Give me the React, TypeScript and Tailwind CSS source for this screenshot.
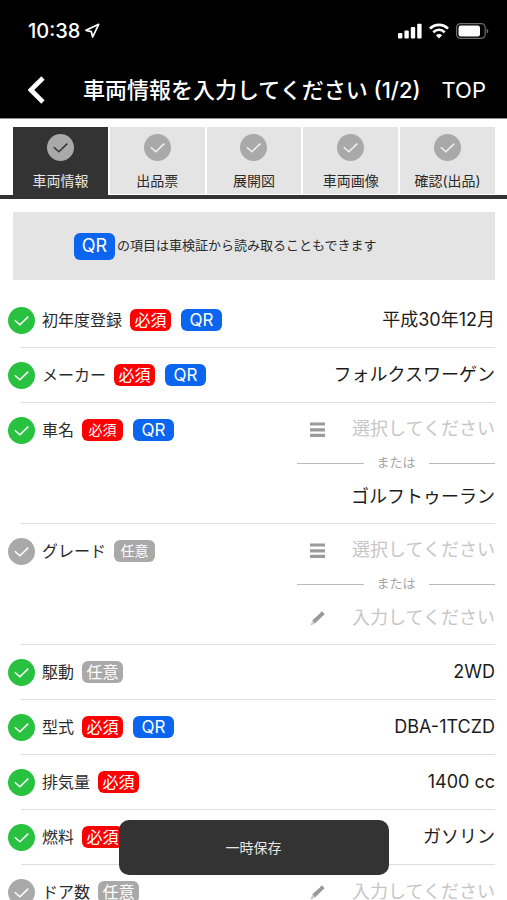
import React, { useState } from 'react';
import { Navigation } from 'lucide-react';
import clsx from 'clsx';

type BadgeKind = 'required' | 'optional' | 'qr';

interface Field {
  id: string;
  label: string;
  done: boolean;
  required: boolean;
  qr?: boolean;
  smallBadge?: boolean;
  selectable?: boolean;
  pencil?: boolean;
  value: string;
}

const STEPS = ['車両情報', '出品票', '展開図', '車両画像', '確認(出品)'];

const FIELDS: Field[] = [
  { id: 'first-registration', label: '初年度登録', done: true, required: true, qr: true, value: '平成30年12月' },
  { id: 'maker', label: 'メーカー', done: true, required: true, qr: true, value: 'フォルクスワーゲン' },
  { id: 'model-name', label: '車名', done: true, required: true, qr: true, smallBadge: true, selectable: true, value: 'ゴルフトゥーラン' },
  { id: 'grade', label: 'グレード', done: false, required: false, smallBadge: true, selectable: true, pencil: true, value: '' },
  { id: 'drive', label: '駆動', done: true, required: false, value: '2WD' },
  { id: 'model-code', label: '型式', done: true, required: true, qr: true, value: 'DBA-1TCZD' },
  { id: 'displacement', label: '排気量', done: true, required: true, value: '1400 cc' },
  { id: 'fuel', label: '燃料', done: true, required: true, value: 'ガソリン' },
  { id: 'doors', label: 'ドア数', done: false, required: false, pencil: true, value: '' },
];

const CheckCircle = ({ fill, stroke = '#ffffff' }: { fill: string; stroke?: string }) => (
  <svg width="27" height="27" viewBox="0 0 27 27" className="shrink-0" aria-hidden="true">
    <circle cx="13.5" cy="13.5" r="13.5" fill={fill} />
    <path d="M6.8 13.2l5.1 4.6 8.4-8.2" fill="none" stroke={stroke} strokeWidth="1.5" />
  </svg>
);

const ListIcon = () => (
  <svg width="15" height="15" viewBox="0 0 15 15" className="shrink-0" aria-hidden="true">
    <path d="M0 2h15M0 7.8h15M0 13.4h15" stroke="#9b9b9b" strokeWidth="3.2" />
  </svg>
);

const PencilIcon = () => (
  <svg width="15" height="15" viewBox="0 0 15 15" className="shrink-0" aria-hidden="true">
    <path d="M3.6 11L10.6 4.4M11.2 3.8L13.3 1.8" stroke="#999999" strokeWidth="4" />
    <path d="M10 5L12 3.1" stroke="#999999" strokeWidth="3.4" />
    <path d="M2.2 10.2L4.8 12.8L0.4 14.6Z" fill="#c4c4c4" />
  </svg>
);

const StatusBar = () => (
  <div className="flex h-[62px] items-center justify-between pl-7 pr-[18px]">
    <div className="flex items-center gap-1 text-xl font-medium">
      <span>10:38</span>
      <Navigation size={16} strokeWidth={2.6} />
    </div>
    <div className="flex items-center gap-[7px]">
      <svg width="24" height="16" viewBox="0 0 24 16" fill="#ffffff" aria-hidden="true">
        <rect x="0" y="10" width="4.4" height="5.6" rx="1" />
        <rect x="6.4" y="7.4" width="4.4" height="8.2" rx="1" />
        <rect x="12.8" y="4" width="4.4" height="11.6" rx="1" />
        <rect x="19.2" y="0.8" width="4.4" height="14.8" rx="1" />
      </svg>
      <svg width="20" height="16" viewBox="0 0 20 16" fill="none" stroke="#ffffff" aria-hidden="true">
        <path d="M1 5.6C6 0.6 14 0.6 19 5.6" strokeWidth="2.7" />
        <path d="M4.3 9.2C7.6 6 12.4 6 15.7 9.2" strokeWidth="2.6" />
        <path d="M10 15.4L6.9 12.2C8.6 10.7 11.4 10.7 13.1 12.2Z" fill="#ffffff" stroke="none" />
      </svg>
      <svg width="33" height="16" viewBox="0 0 33 16" aria-hidden="true">
        <rect x="0.6" y="0.6" width="28.6" height="14.8" rx="4" fill="none" stroke="#6f6f6f" strokeWidth="1.2" />
        <rect x="2.5" y="2.5" width="21.5" height="11" rx="2.2" fill="#ffffff" />
        <path d="M30.6 5.4C32.8 6.2 32.8 9.8 30.6 10.6Z" fill="#6f6f6f" />
      </svg>
    </div>
  </div>
);

const Badge = ({ kind, small }: { kind: BadgeKind; small?: boolean }) => {
  const base = 'flex h-[22px] w-[41px] shrink-0 items-center justify-center rounded-md text-white';
  if (kind === 'qr') {
    return <button type="button" className={clsx(base, 'bg-[#0b65ee] pt-0.5 text-[17px]')}>QR</button>;
  }
  return (
    <span
      className={clsx(
        base,
        small ? 'text-sm' : 'text-base',
        kind === 'required' ? 'bg-[#fe0000]' : 'bg-[#a9a9a9]'
      )}
    >
      {kind === 'required' ? '必須' : '任意'}
    </span>
  );
};

const ValueInput = ({ field }: { field: Field }) => {
  const [value, setValue] = useState(field.value);
  return (
    <input
      id={field.id}
      type="text"
      value={value}
      onChange={(e) => setValue(e.target.value)}
      placeholder="入力してください"
      className="w-full min-w-0 bg-transparent text-right text-lg text-[#1c1c1c] placeholder-[#c6c6c6] focus:outline-none"
    />
  );
};

const FieldRow = ({ field }: { field: Field }) => (
  <li>
    <div className="flex items-start justify-between pl-2 pr-3">
      <div className="flex h-[54px] shrink-0 items-center">
        <CheckCircle fill={field.done ? '#28c140' : '#a9a9a9'} />
        <label htmlFor={field.id} className="ml-[7px] mr-2 text-base text-[#2b2b2b]">{field.label}</label>
        <div className="flex gap-2.5">
          <Badge kind={field.required ? 'required' : 'optional'} small={field.smallBadge} />
          {field.qr && <Badge kind="qr" />}
        </div>
      </div>

      {field.selectable ? (
        <div className="w-[198px] py-[9px]">
          <div className="flex h-[34px] items-center pl-[13px]">
            <ListIcon />
            <select
              aria-label={`${field.label}を選択`}
              defaultValue=""
              className="w-full min-w-0 appearance-none bg-transparent text-lg text-[#c6c6c6] [text-align-last:right] focus:outline-none"
            >
              <option value="">選択してください</option>
            </select>
          </div>
          <div className="flex h-[34px] items-center gap-[13px] text-[13px] text-[#a6a6a6]">
            <span className="h-px flex-1 bg-[#b9b9b9]" />
            または
            <span className="h-px flex-1 bg-[#b9b9b9]" />
          </div>
          <div className="flex h-[34px] items-center pl-[13px]">
            {field.pencil && <PencilIcon />}
            <ValueInput field={field} />
          </div>
        </div>
      ) : (
        <div className="flex h-[54px] w-[198px] items-center pl-[13px]">
          {field.pencil && <PencilIcon />}
          <ValueInput field={field} />
        </div>
      )}
    </div>
    <div className="ml-[21px] mr-3 h-px bg-[#dedede]" />
  </li>
);

export default function App() {
  const [step, setStep] = useState(0);

  return (
    <div className="flex h-screen flex-col bg-white font-['Inter','Noto_Sans_CJK_JP',sans-serif]">
      <header className="shrink-0 border-b border-[#8a8a8a] bg-black text-white">
        <StatusBar />
        <div className="flex h-14 items-center pl-7 pr-[21px]">
          <button type="button" aria-label="戻る">
            <svg width="17" height="28" viewBox="0 0 17 28" fill="none" aria-hidden="true">
              <path d="M15 2L2.8 14L15 26" stroke="#ffffff" strokeWidth="4.6" />
            </svg>
          </button>
          <h1 className="flex-1 whitespace-nowrap pr-[21px] text-right text-[22px] font-medium">
            車両情報を入力してください (1/2)
          </h1>
          <button type="button" className="text-[22px]">TOP</button>
        </div>
      </header>

      <nav className="shrink-0 border-b-4 border-[#333333] pl-[13px] pr-3 pt-2">
        <ul className="grid grid-cols-5 gap-0.5">
          {STEPS.map((name, i) => (
            <li key={name}>
              <button
                type="button"
                onClick={() => setStep(i)}
                className={clsx(
                  'flex h-[68px] w-full flex-col items-center border-b pt-[7px] text-sm',
                  i === step
                    ? 'border-[#333333] bg-[#333333] text-[#e4e4e4]'
                    : 'border-white bg-[#e4e4e4] text-[#2b2b2b]'
                )}
              >
                <CheckCircle fill="#a9a9a9" stroke={i === step ? '#333333' : '#f2f2f2'} />
                <span className="mt-2.5 leading-5">{name}</span>
              </button>
            </li>
          ))}
        </ul>
      </nav>

      <main className="flex-1 overflow-y-auto [scrollbar-width:none]">
        <div className="ml-[13px] mr-3 mt-[13px] flex h-[68px] items-center bg-[#e4e4e4] pl-[61px]">
          <button type="button" className="flex h-[27px] w-[41px] shrink-0 items-center justify-center rounded-md bg-[#0b65ee] text-lg text-white">
            QR
          </button>
          <p className="ml-0.5 text-[13px] text-[#2b2b2b]">の項目は車検証から読み取ることもできます</p>
        </div>

        <ul className="mt-[13px]">
          {FIELDS.map((field) => (
            <FieldRow key={field.id} field={field} />
          ))}
        </ul>
      </main>

      {/* Floating save button */}
      <button
        type="button"
        className="fixed bottom-[25px] left-1/2 h-[55px] w-[270px] -translate-x-1/2 rounded-[10px] bg-[#333333] text-sm text-[#e4e4e4]"
      >
        一時保存
      </button>
    </div>
  );
}
